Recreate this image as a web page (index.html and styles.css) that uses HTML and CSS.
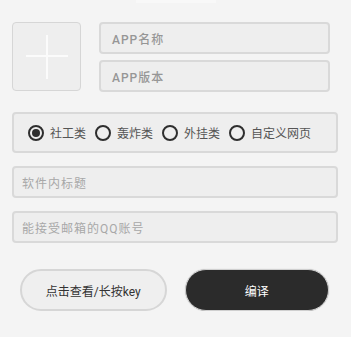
FILE: index.html
```html
<!DOCTYPE html>
<html lang="zh-CN">
<head>
    <meta charset="UTF-8">
    <meta name="viewport" content="width=device-width, initial-scale=1.0">
    <title>编译</title>
    <link rel="stylesheet" href="styles.css">
</head>
<body>
    <div class="topbar"></div>
    <div class="container">
        <div class="app-row">
            <div class="icon-box">
                <svg width="46" height="48" viewBox="0 0 46 48">
                    <path d="M2 23H44M23 2V46" stroke="#fbfbfb" stroke-width="2" fill="none"/>
                </svg>
            </div>
            <div class="app-fields">
                <div class="field bold">APP名称</div>
                <div class="field bold">APP版本</div>
            </div>
        </div>

        <div class="radio-box">
            <label class="radio checked"><span class="dot"></span>社工类</label>
            <label class="radio"><span class="dot"></span>轰炸类</label>
            <label class="radio"><span class="dot"></span>外挂类</label>
            <label class="radio"><span class="dot"></span>自定义网页</label>
        </div>

        <div class="field wide">软件内标题</div>
        <div class="field wide">能接受邮箱的QQ账号</div>

        <div class="buttons">
            <button class="btn light">点击查看/长按key</button>
            <button class="btn dark">编译</button>
        </div>
    </div>
</body>
</html>
```

FILE: styles.css
```css
body {
    margin: 0;
    background-color: #f4f4f4;
    font-family: Roboto, "Noto Sans CJK SC", sans-serif;
    font-size: 12px;
    color: #333;
}
.topbar {
    width: 80px;
    height: 3px;
    margin: 0 auto;
    background: #f8f8f8;
}
.container {
    padding: 19px 13px 0 12px;
}
.app-row {
    display: flex;
    gap: 18px;
    padding-right: 8px;
}
.icon-box {
    width: 67px;
    height: 67px;
    border: 1.5px solid #d6d6d6;
    border-radius: 4px;
    background: #eeeeee;
    display: flex;
    justify-content: center;
    align-items: center;
}
.app-fields {
    flex: 1;
    display: flex;
    flex-direction: column;
    gap: 6px;
}
.field {
    height: 28px;
    border: 2px solid #d9d9d9;
    border-radius: 4px;
    background: #eeeeee;
    display: flex;
    align-items: center;
    padding-left: 11px;
    color: #a8a8a8;
}
.field.bold {
    color: #969696;
    font-weight: 500;
    letter-spacing: 1px;
}
.field.wide {
    padding-left: 8px;
    margin-top: 13px;
    letter-spacing: 1px;
}
.radio-box {
    margin-top: 20px;
    height: 37px;
    border: 2px solid #d9d9d9;
    border-radius: 4px;
    background: #eeeeee;
    display: flex;
    align-items: center;
    padding-left: 14px;
}
.radio {
    display: flex;
    align-items: center;
    gap: 6px;
    margin-right: 9px;
    color: #555;
}
.dot {
    width: 12px;
    height: 12px;
    border: 2px solid #2e2e2e;
    border-radius: 50%;
    display: flex;
    justify-content: center;
    align-items: center;
}
.checked .dot::after {
    content: "";
    width: 8px;
    height: 8px;
    border-radius: 50%;
    background: #2e2e2e;
}
.buttons {
    display: flex;
    gap: 18px;
    margin-top: 26px;
    padding: 0 9px 0 8px;
}
.btn {
    flex: 1;
    height: 42px;
    border-radius: 21px;
    font-family: Roboto, "Noto Sans CJK SC", sans-serif;
    font-size: 12px;
    cursor: pointer;
}
.btn.light {
    background: #efefef;
    border: 2px solid #d6d6d6;
    color: #333;
}
.btn.dark {
    background: #2b2b2b;
    border: 1px solid #cfcfcf;
    color: #fff;
    box-shadow: 0 0 1px #bbb;
}
```
